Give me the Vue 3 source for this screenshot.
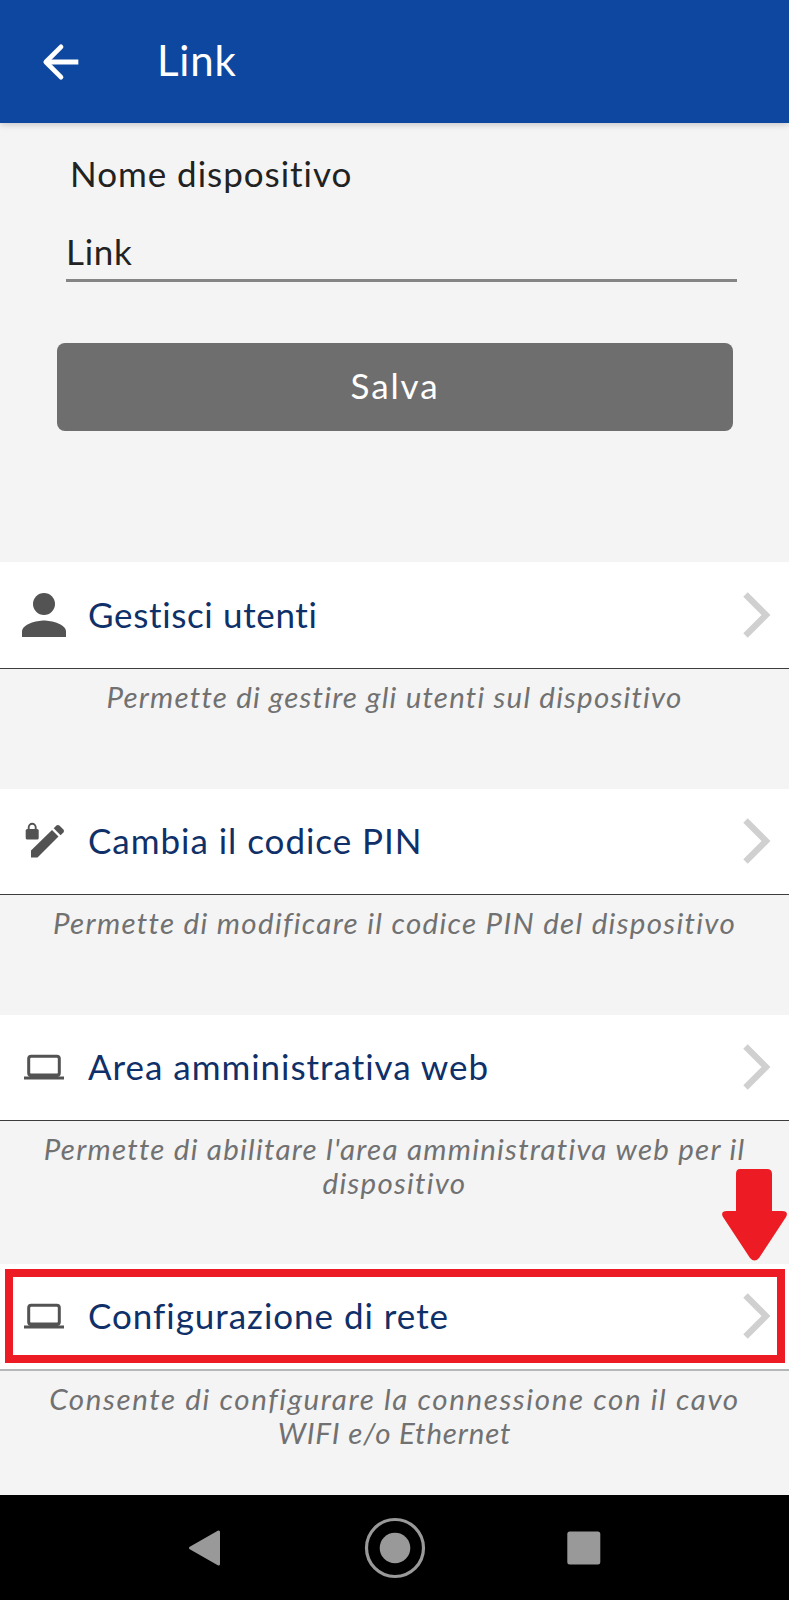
<template>
  <div class="screen">
    <header class="app-bar">
      <svg class="back" viewBox="0 0 24 24" fill="none" stroke="#fff" stroke-width="2.200">
        <path d="M20 12H5.400" />
        <path d="M12 5L5 12l7 7" stroke-linecap="round" stroke-linejoin="round" />
      </svg>
      <h1>Link</h1>
    </header>

    <form class="device-form" @submit.prevent>
      <label for="nome">Nome dispositivo</label>
      <input id="nome" v-model="nome" type="text" />
      <button type="submit">Salva</button>
    </form>

    <section v-for="item in items" :key="item.title" class="item" :class="item.id">
      <div class="row">
        <svg v-if="item.icon === 'user'" class="icon" viewBox="0 0 66 66" fill="#535353">
          <circle cx="33" cy="22" r="11" />
          <path d="M33 38.500c-7.300 0-22 3.700-22 11V55h44v-5.500c0-7.300-14.700-11-22-11z" />
        </svg>
        <svg v-else-if="item.icon === 'pin'" class="icon" viewBox="0 0 66 66" fill="#535353">
          <rect x="14.700" y="21" width="13" height="10.500" rx="1.600" />
          <path d="M17.700 22v-2.500a3.500 3.700 0 0 1 7 0V22" fill="none" stroke="#535353" stroke-width="1.900" />
          <path d="M20 49.500v-7l21-20.500 6.500 6.500-21 21z" />
          <path d="M42.700 20.300l2.700-2.700q1.500-1.300 3 0l4 4q1.400 1.500 0 3l-2.800 2.700z" />
        </svg>
        <svg v-else class="icon" viewBox="0 0 66 66" fill="#535353">
          <rect x="17.700" y="22.300" width="30.600" height="19.200" rx="2.500" fill="none" stroke="#535353" stroke-width="3" />
          <rect x="13" y="42.500" width="40" height="3" />
          <rect x="19" y="39.500" width="28" height="4" />
        </svg>
        <span class="title">{{ item.title }}</span>
        <svg class="chevron" viewBox="0 0 30 50" fill="none" stroke="#d0d0d0" stroke-width="6.300">
          <path d="M4.500 4.500L25 25 4.500 45.500" />
        </svg>
      </div>
      <p class="caption">
        <span
          v-for="line in item.lines"
          :key="line.text"
          :style="{ letterSpacing: line.tracking + 'px' }"
        >{{ line.text }}</span>
      </p>

      <template v-if="item.highlighted">
        <div class="highlight"></div>
        <svg class="pointer" viewBox="0 0 65 92" fill="#ed1c24">
          <path d="M18 0h27q5 0 5 5v37h10q7 0 4 6L37 89q-4.500 5-9 0L1 48q-3-6 4-6h9V5q0-5 4-5z" />
        </svg>
      </template>
    </section>

    <nav class="nav-bar">
      <svg viewBox="0 0 64 64" fill="#999" stroke="#999" stroke-width="3" stroke-linejoin="round">
        <path d="M17.500 32L45.500 16v32z" />
      </svg>
      <svg viewBox="0 0 64 64" fill="#999">
        <circle cx="32" cy="32" r="28.500" fill="none" stroke="#999" stroke-width="3.200" />
        <circle cx="32" cy="32" r="15.300" />
      </svg>
      <svg viewBox="0 0 64 64" fill="#999">
        <rect x="14.300" y="15.500" width="33" height="33" rx="2.500" />
      </svg>
    </nav>
  </div>
</template>

<script setup>
import { ref } from 'vue';

const nome = ref('Link');

const items = [
  {
    id: 'utenti',
    icon: 'user',
    title: 'Gestisci utenti',
    lines: [{ text: 'Permette di gestire gli utenti sul dispositivo', tracking: 1.2 }]
  },
  {
    id: 'pin',
    icon: 'pin',
    title: 'Cambia il codice PIN',
    lines: [{ text: 'Permette di modificare il codice PIN del dispositivo', tracking: 1.31 }]
  },
  {
    id: 'web',
    icon: 'laptop',
    title: 'Area amministrativa web',
    lines: [
      { text: "Permette di abilitare l'area amministrativa web per il", tracking: 1.25 },
      { text: 'dispositivo', tracking: 1.25 }
    ]
  },
  {
    id: 'rete',
    icon: 'laptop',
    title: 'Configurazione di rete',
    highlighted: true,
    lines: [
      { text: 'Consente di configurare la connessione con il cavo', tracking: 1.63 },
      { text: 'WIFI e/o Ethernet', tracking: 0.83 }
    ]
  }
];
</script>

<style>
body {
  margin: 0;
  background: #f4f4f4;
}
</style>

<style scoped>
.screen {
  width: 789px;
  height: 1600px;
  display: flex;
  flex-direction: column;
  overflow: hidden;
  background: #f4f4f4;
  font-family: "Lato", "Liberation Sans", sans-serif;
  font-size: 35px;
  letter-spacing: 0.97px;
  font-variant-ligatures: none;
}
svg {
  display: block;
  flex: none;
}
.app-bar {
  height: 123px;
  flex: none;
  box-sizing: border-box;
  padding-left: 35px;
  display: flex;
  align-items: center;
  background: #0e479f;
  box-shadow: 0 1px 7px rgba(0, 0, 0, 0.22);
}
.back {
  width: 52px;
  height: 52px;
}
.app-bar h1 {
  margin: 0 0 0 70px;
  padding-bottom: 3px;
  color: #fff;
  font-size: 42px;
  font-weight: 400;
  letter-spacing: 0.8px;
}
.device-form {
  height: 439px;
  flex: none;
  box-sizing: border-box;
  padding: 29px 56px 0 57px;
  display: flex;
  flex-direction: column;
}
.device-form label {
  padding-left: 13px;
  line-height: 42px;
  color: #222;
}
.device-form input {
  height: 53px;
  box-sizing: border-box;
  margin: 35px -4px 0 9px;
  padding: 0 0 6px;
  border: none;
  border-bottom: 3px solid #858585;
  background: none;
  outline: none;
  color: #222;
  font: inherit;
  letter-spacing: 0.7px;
}
.device-form button {
  height: 88px;
  margin-top: 61px;
  padding: 0 0 4px;
  border: none;
  border-radius: 8px;
  background: #6e6e6e;
  color: #fff;
  font: inherit;
  letter-spacing: 1.9px;
}
.item {
  position: relative;
  flex: none;
  height: 226px;
}
.utenti {
  height: 227px;
}
.web {
  height: 249px;
}
.rete {
  height: 231px;
}
.row {
  height: 105px;
  display: flex;
  align-items: center;
  padding: 0 18px 0 11px;
  background: #fff;
  border-bottom: 1px solid #3c3c3c;
}
.utenti .row {
  height: 106px;
}
.rete .row {
  border-bottom: 2px solid #b4b8b8;
}
.icon {
  width: 66px;
  height: 66px;
  margin-bottom: 1px;
}
.title {
  flex: 1;
  padding: 0 0 3px 11px;
  color: #0f3068;
}
.utenti .title {
  letter-spacing: 0.65px;
}
.chevron {
  width: 30px;
  height: 50px;
  margin-bottom: 1px;
}
.caption {
  margin: 0;
  padding-top: 11px;
  color: #717171;
  font-size: 29.5px;
  font-style: italic;
  line-height: 34px;
  text-align: center;
}
.caption span {
  display: block;
  white-space: nowrap;
}
.highlight {
  position: absolute;
  top: 5px;
  left: 5px;
  width: 780px;
  height: 94px;
  box-sizing: border-box;
  border: 8px solid #ed1c24;
}
.pointer {
  position: absolute;
  top: -95px;
  left: 722px;
  width: 65px;
  height: 92px;
}
.nav-bar {
  height: 105px;
  flex: none;
  display: flex;
  align-items: center;
  justify-content: center;
  gap: 126px;
  background: #000;
}
.nav-bar svg {
  width: 64px;
  height: 64px;
}
</style>
